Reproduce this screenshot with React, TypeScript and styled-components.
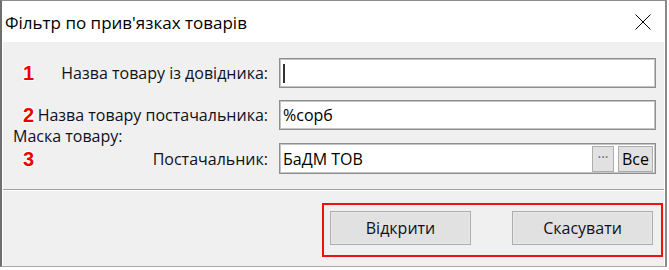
import React from "react";
import styled, { createGlobalStyle } from "styled-components";

const Global = createGlobalStyle`
  html, body { margin: 0; padding: 0; background: #ffffff; }
  body { font-family: "Open Sans", "Noto Sans", sans-serif; color: #000; }
  * { box-sizing: border-box; }
`;

const Window = styled.div`
  width: 667px;
  height: 267px;
  border-top: 1px solid #8c8c8c;
  border-left: 2px solid #6f6f6f;
  border-right: 2px solid #8a8a8a;
  border-bottom: 1px solid #a8a8a8;
  display: flex;
  flex-direction: column;
  background: #ffffff;
`;

const TitleBar = styled.div`
  height: 41px;
  flex: none;
  display: flex;
  align-items: center;
  justify-content: space-between;
  padding: 1px 14px 0 3px;
  font-size: 17px;
  color: #000;
`;

const CloseIcon = styled.svg`
  width: 16px;
  height: 16px;
  display: block;
`;

const Client = styled.div`
  flex: 1;
  margin: 0 1px;
  background: #f0f0f0;
  display: flex;
  flex-direction: column;
`;

const FormPanel = styled.div`
  padding: 16px 8px 15px 20px;
  border-bottom: 1px solid #a0a0a0;
  display: flex;
  flex-direction: column;
`;

const Row = styled.div<{ $h: number; $mt?: number }>`
  display: flex;
  align-items: center;
  height: ${(p) => p.$h}px;
  margin-top: ${(p) => p.$mt ?? 0}px;
`;

const Num = styled.span`
  width: 12px;
  flex: none;
  font-family: "Liberation Sans", Arial, sans-serif;
  font-weight: bold;
  font-size: 20px;
  color: #ee0000;
  text-shadow: 1px 0 0 #fff, -1px 0 0 #fff, 0 1px 0 #fff, 0 -1px 0 #fff,
    1px 1px 0 #fff, -1px -1px 0 #fff, 1px -1px 0 #fff, -1px 1px 0 #fff;
  line-height: 1;
`;

const Label = styled.span`
  flex: 1;
  text-align: right;
  padding-right: 11px;
  font-size: 16px;
  color: #101020;
  white-space: nowrap;
`;

const MaskLabel = styled.div`
  height: 13px;
  line-height: 13px;
  margin-left: -10px;
  font-size: 16px;
  color: #101020;
  white-space: nowrap;
`;

const Field = styled.div`
  width: 377px;
  height: 100%;
  flex: none;
  background: #ffffff;
  border: 1px solid #8e8e8e;
  box-shadow: inset 0 0 0 1px #c4c4c4;
  display: flex;
  align-items: center;
  padding: 0 2px 0 3px;
  font-size: 16px;
  color: #000;
  gap: 4px;
`;

const FieldText = styled.span`
  flex: 1;
  white-space: nowrap;
`;

const Caret = styled.span`
  width: 2px;
  height: 19px;
  background: #333;
  display: block;
`;

const MiniButton = styled.div<{ $w: number }>`
  width: ${(p) => p.$w}px;
  height: 26px;
  flex: none;
  background: #e1e1e1;
  border: 1px solid #adadad;
  display: flex;
  align-items: center;
  justify-content: center;
  font-size: 16px;
  color: #000;
`;

const Dots = styled.span`
  color: #6a6a6a;
  font-size: 14px;
  line-height: 1;
  margin-top: -4px;
`;

const Footer = styled.div`
  flex: 1;
  border-top: 1px solid #ffffff;
  display: flex;
  justify-content: flex-end;
  align-items: flex-start;
  padding: 12px 1px 0 0;
`;

const Highlight = styled.div`
  width: 341px;
  height: 54px;
  border: 2px solid #ee1111;
  display: flex;
  gap: 41px;
  padding: 6px 7px 0 6px;
`;

const Button = styled.div`
  width: 141px;
  height: 34px;
  background: #e1e1e1;
  border: 1px solid #adadad;
  box-shadow: inset 0 0 0 1px #e8e8e8;
  display: flex;
  align-items: center;
  justify-content: center;
  font-size: 16px;
  color: #101020;
`;

export default function App() {
  return (
    <>
      <Global />
      <Window>
        <TitleBar>
          <span>Фільтр по прив'язках товарів</span>
          <CloseIcon viewBox="0 0 16 16">
            <path d="M0.5 0.5 L15.5 15.5 M15.5 0.5 L0.5 15.5" stroke="#000" strokeWidth="1" fill="none" />
          </CloseIcon>
        </TitleBar>
        <Client>
          <FormPanel>
            <Row $h={30}>
              <Num>1</Num>
              <Label>Назва товару із довідника:</Label>
              <Field>
                <Caret />
              </Field>
            </Row>
            <Row $h={30} $mt={12}>
              <Num>2</Num>
              <Label>Назва товару постачальника:</Label>
              <Field>
                <FieldText>%сорб</FieldText>
              </Field>
            </Row>
            <MaskLabel>Маска товару:</MaskLabel>
            <Row $h={31}>
              <Num>3</Num>
              <Label>Постачальник:</Label>
              <Field>
                <FieldText>БаДМ ТОВ</FieldText>
                <MiniButton $w={22}>
                  <Dots>···</Dots>
                </MiniButton>
                <MiniButton $w={35}>Все</MiniButton>
              </Field>
            </Row>
          </FormPanel>
          <Footer>
            <Highlight>
              <Button>Відкрити</Button>
              <Button>Скасувати</Button>
            </Highlight>
          </Footer>
        </Client>
      </Window>
    </>
  );
}
